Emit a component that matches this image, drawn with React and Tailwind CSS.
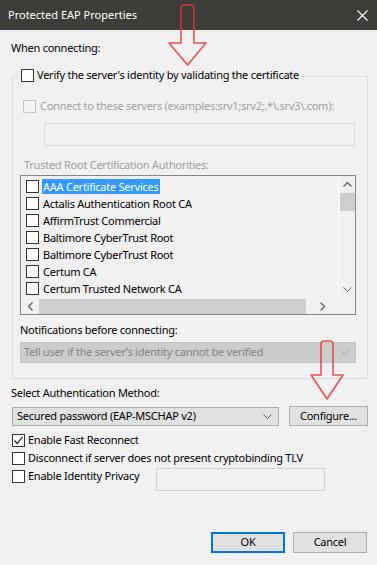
import React from 'react';

const font = { fontFamily: '"Noto Sans", "Open Sans", sans-serif' };

const certs = [
  'AAA Certificate Services',
  'Actalis Authentication Root CA',
  'AffirmTrust Commercial',
  'Baltimore CyberTrust Root',
  'Baltimore CyberTrust Root',
  'Certum CA',
  'Certum Trusted Network CA',
];

const Box = ({ checked, disabled }) => (
  <span
    className={
      'flex h-[13px] w-[13px] shrink-0 items-center justify-center border ' +
      (disabled ? 'border-[#c4c4c4] bg-[#f4f4f4]' : 'border-[#333333] bg-white')
    }
  >
    {checked && (
      <svg width="11" height="11" viewBox="0 0 11 11">
        <path d="M1.5 5.5 L4.2 8.5 L9.5 1.8" fill="none" stroke="#222" strokeWidth="1.2" />
      </svg>
    )}
  </span>
);

const Chevron = ({ color }) => (
  <svg width="9" height="5" viewBox="0 0 9 5">
    <path d="M0.5 0.5 L4.5 4.5 L8.5 0.5" fill="none" stroke={color} strokeWidth="1" />
  </svg>
);

const Arrow = ({ d }) => (
  <path d={d} fill="none" stroke="#e03a3a" strokeWidth="1.6" strokeLinejoin="round" opacity="0.85" />
);

export default function App() {
  return (
    <div
      className="relative flex h-[565px] w-[377px] flex-col overflow-hidden whitespace-nowrap bg-[#f0f0f0] text-[11px] tracking-[-0.25px] text-black"
      style={font}
    >
      {/* title bar */}
      <div className="flex h-[30px] shrink-0 items-center justify-between bg-[#3f3d3a] pl-[8px] pr-[9px] tracking-normal text-white">
        <span className="leading-[14px]">Protected EAP Properties</span>
        <svg width="11" height="11" viewBox="0 0 11 11">
          <path d="M0.5 0.5 L10.5 10.5 M10.5 0.5 L0.5 10.5" stroke="#fff" strokeWidth="1.1" />
        </svg>
      </div>

      <div className="mt-[11px] pl-[11px] leading-[14px]">When connecting:</div>

      {/* group box */}
      <div className="ml-[12px] mt-[21px] w-[356px] border border-[#dcdcdc]">
        <div className="-mt-[9px] ml-[6px] flex h-[14px] w-fit items-center gap-[3px] bg-[#f0f0f0] px-[2px] leading-[14px]">
          <Box />
          <span>Verify the server's identity by validating the certificate</span>
        </div>

        <div className="ml-[10px] mt-[17px] flex h-[14px] items-center gap-[4px] leading-[14px] text-[#a0a0a0]">
          <Box disabled />
          <span>Connect to these servers (examples:srv1;srv2;.*\.srv3\.com):</span>
        </div>

        <div className="ml-[31px] mt-[10px] h-[23px] w-[311px] border border-[#d9d9d9] bg-[#f0f0f0]" />

        <div className="ml-[11px] mt-[12px] h-[14px] leading-[14px] text-[#a0a0a0]">Trusted Root Certification Authorities:</div>

        {/* list */}
        <div className="ml-[7px] mt-[3px] flex h-[140px] w-[336px] flex-col border border-[#828790] bg-[#f0f0f0]">
          <div className="flex flex-1">
            <div className="flex-1 pt-[2px]">
              {certs.map((c, i) => (
                <div key={i} className="flex h-[17px] items-center pl-[5px]">
                  <Box />
                  <span
                    className={
                      'ml-[3px] px-[1px] leading-[15px] ' + (i === 0 ? 'bg-[#3399ff] text-white' : '')
                    }
                  >
                    {c}
                  </span>
                </div>
              ))}
            </div>
            <div className="flex w-[17px] flex-col items-center border-l border-white">
              <div className="flex h-[17px] items-center justify-center">
                <svg width="9" height="5" viewBox="0 0 9 5">
                  <path d="M0.5 4.5 L4.5 0.5 L8.5 4.5" fill="none" stroke="#606060" strokeWidth="1.3" />
                </svg>
              </div>
              <div className="h-[18px] w-[15px] bg-[#cdcdcd]" />
              <div className="flex-1" />
              <div className="flex h-[17px] items-center justify-center">
                <Chevron color="#606060" />
              </div>
            </div>
          </div>
          <div className="flex h-[16px]">
            <div className="flex flex-1 items-center">
              <div className="flex w-[18px] justify-center">
                <svg width="5" height="9" viewBox="0 0 5 9">
                  <path d="M4.5 0.5 L0.5 4.5 L4.5 8.5" fill="none" stroke="#606060" strokeWidth="1.3" />
                </svg>
              </div>
              <div className="h-[15px] flex-1 bg-[#cdcdcd]" />
              <div className="flex w-[32px] justify-center">
                <svg width="5" height="9" viewBox="0 0 5 9">
                  <path d="M0.5 0.5 L4.5 4.5 L0.5 8.5" fill="none" stroke="#606060" strokeWidth="1.3" />
                </svg>
              </div>
            </div>
            <div className="w-[17px]" />
          </div>
        </div>

        <div className="ml-[7px] mt-[8px] h-[14px] leading-[14px]">Notifications before connecting:</div>

        <div className="ml-[7px] mt-[5px] flex h-[21px] w-[336px] items-center justify-between border border-[#c4c4c4] bg-[#cccccc] pl-[3px] pr-[6px] text-[#838383]">
          <span>Tell user if the server’s identity cannot be verified</span>
          <Chevron color="#a6a6a6" />
        </div>

        <div className="h-[15px]" />
      </div>

      <div className="ml-[11px] mt-[7px] h-[14px] leading-[14px]">Select Authentication Method:</div>

      <div className="ml-[12px] mt-[6px] flex h-[20px] items-center gap-[10px]">
        <div className="flex h-[19px] w-[267px] items-center justify-between border border-[#adadad] bg-[#e1e1e1] pl-[4px] pr-[6px]">
          <span>Secured password (EAP-MSCHAP v2)</span>
          <Chevron color="#555" />
        </div>
        <div className="flex h-[20px] w-[79px] items-center justify-center border border-[#adadad] bg-[#e1e1e1]">
          Configure...
        </div>
      </div>

      <div className="ml-[12px] mt-[5px] flex flex-col">
        <div className="flex h-[18px] items-center gap-[3px]">
          <Box checked />
          <span>Enable Fast Reconnect</span>
        </div>
        <div className="flex h-[18px] items-center gap-[3px]">
          <Box />
          <span>Disconnect if server does not present cryptobinding TLV</span>
        </div>
        <div className="flex items-start">
          <div className="flex h-[18px] w-[144px] items-center gap-[3px]">
            <Box />
            <span>Enable Identity Privacy</span>
          </div>
          <div className="mt-[1px] h-[23px] w-[169px] border border-[#d0d0d0] bg-[#f0f0f0]" />
        </div>
      </div>

      <div className="mt-auto mb-[12px] mr-[10px] flex justify-end gap-[8px]">
        <div className="flex h-[21px] w-[74px] items-center justify-center border-2 border-[#0078d7] bg-[#e1e1e1]">OK</div>
        <div className="flex h-[21px] w-[74px] items-center justify-center border border-[#adadad] bg-[#e1e1e1]">Cancel</div>
      </div>

      {/* red annotation arrows */}
      <svg className="pointer-events-none absolute left-0 top-0" width="377" height="565" viewBox="0 0 377 565">
        <Arrow d="M181 43 L181 8 Q181 5 184 5 L191 5 Q194 5 194 8 L194 43 L206 43 L187.5 65 L169 43 Z" />
        <Arrow d="M321 375 L321 344 Q321 341 324 341 L330 341 Q333 341 333 344 L333 375 L343 375 L327 399 L311 375 Z" />
      </svg>
    </div>
  );
}
